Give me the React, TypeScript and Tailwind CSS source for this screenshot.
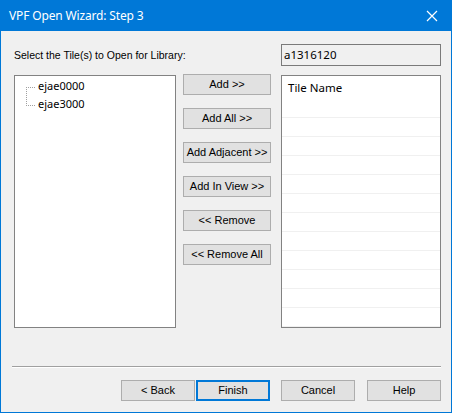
import React from "react";

const btn =
  "h-[21px] w-[88px] bg-[#e1e1e1] border border-[#adadad] text-[11px] text-black flex items-center justify-center";
const sbtn =
  "h-[21px] w-[74px] bg-[#e1e1e1] border border-[#adadad] text-[11px] text-black flex items-center justify-center";
const sans = { fontFamily: '"Liberation Sans", Arial, sans-serif' };
const ui = { fontFamily: '"Noto Sans", "Open Sans", sans-serif' };

export default function App() {
  const rows = Array.from({ length: 11 });
  return (
    <div className="w-[452px] h-[413px] flex flex-col bg-[#f0f0f0] overflow-hidden">
      <div className="h-[31px] bg-[#0078d7] flex items-center justify-between pl-[9px] pr-[10px] shrink-0">
        <span className="text-white text-[12px] tracking-[-0.15px]" style={ui}>
          VPF Open Wizard: Step 3
        </span>
        <svg width="12" height="12" viewBox="0 0 12 12" className="mr-[4px]">
          <path d="M1 1 L11 11 M11 1 L1 11" stroke="white" strokeWidth="1.2" />
        </svg>
      </div>
      <div className="flex-1 flex flex-col border-x border-b border-[#0078d7] pl-[13px] pr-[10px]">
        <div className="flex items-center mt-[13px] h-[22px]">
          <div className="w-[267px] text-[10.5px] text-black pt-[1px]" style={sans}>
            Select the Tile(s) to Open for Library:
          </div>
          <div
            className="w-[160px] h-[22px] border border-[#7a7a7a] bg-[#f0f0f0] flex items-center pl-[2px] text-[11.5px] text-black"
            style={ui}
          >
            a1316120
          </div>
        </div>
        <div className="flex mt-[9px] h-[253px]">
          <div className="w-[162px] h-full border border-[#828282] bg-white relative">
            <div className="absolute left-[11px] top-[11px] h-[19px] border-l border-dotted border-[#a0a0a0]" />
            <div className="flex flex-col">
              {["ejae0000", "ejae3000"].map((t) => (
                <div key={t} className="flex items-center h-[18px]">
                  <div className="ml-[11px] w-[9px] border-t border-dotted border-[#a0a0a0] mt-[4px]" />
                  <span className="ml-[3px] text-[11px] text-black leading-none" style={ui}>
                    {t}
                  </span>
                </div>
              ))}
            </div>
          </div>
          <div className="ml-[7px] mt-[-1px] flex flex-col gap-[13px]" style={sans}>
            <div className={btn}>Add &gt;&gt;</div>
            <div className={btn}>Add All &gt;&gt;</div>
            <div className={btn}>Add Adjacent &gt;&gt;</div>
            <div className={btn}>Add In View &gt;&gt;</div>
            <div className={btn}>&lt;&lt; Remove</div>
            <div className={btn}>&lt;&lt; Remove All</div>
          </div>
          <div className="ml-[10px] w-[160px] h-full border border-[#828282] bg-white flex flex-col overflow-hidden">
            <div className="h-[42px] shrink-0 pl-[6px] pt-[3px] text-[11.5px] text-black border-b border-[#f0f0f0]" style={ui}>
              Tile Name
            </div>
            {rows.map((_, i) => (
              <div key={i} className="h-[19px] shrink-0 border-b border-[#f0f0f0]" />
            ))}
          </div>
        </div>
        <div className="mt-[38px] ml-[-2px] w-[429px] border-t border-[#a0a0a0] border-b border-b-white" />
        <div className="flex mt-[12px] pl-[107px]" style={sans}>
          <div className={sbtn}>&lt; Back</div>
          <div className="ml-[1px] h-[21px] w-[74px] bg-[#e1e1e1] border-2 border-[#0078d7] text-[11px] text-black flex items-center justify-center">
            Finish
          </div>
          <div className={"ml-[11px] " + sbtn}>Cancel</div>
          <div className={"ml-[12px] " + sbtn}>Help</div>
        </div>
      </div>
    </div>
  );
}
